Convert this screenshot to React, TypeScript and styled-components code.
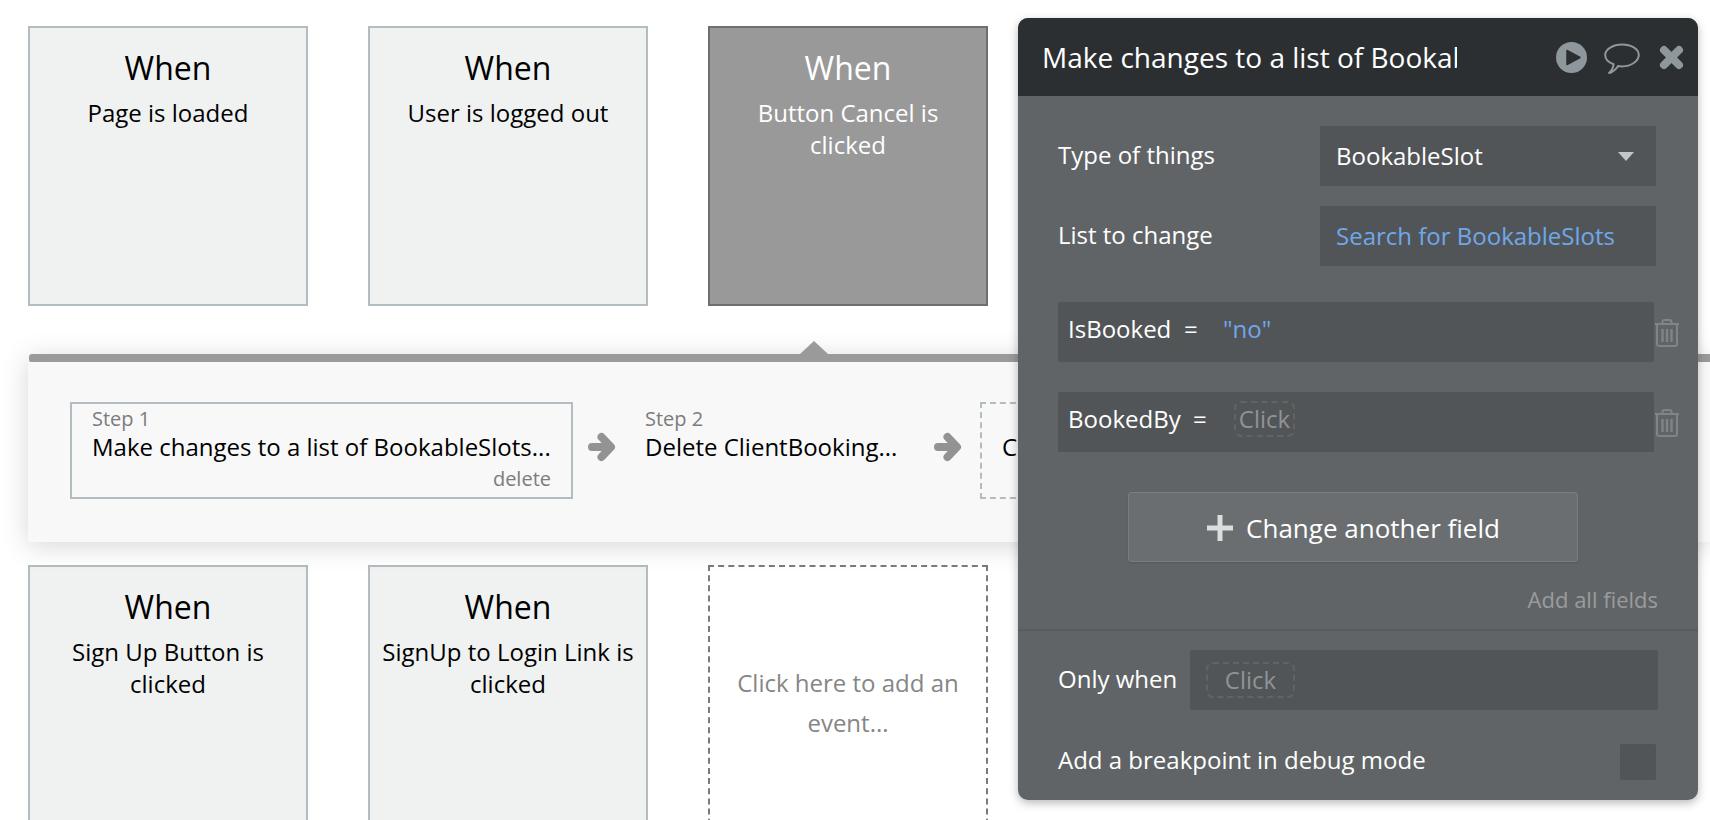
import React from "react";
import styled, { createGlobalStyle } from "styled-components";

const Global = createGlobalStyle`
  html, body { margin: 0; padding: 0; background: #fff; }
  * { box-sizing: border-box; }
`;

const Page = styled.div`
  position: relative;
  width: 1710px;
  height: 820px;
  overflow: hidden;
  padding: 26px 0 0 28px;
  background: #fff;
  font-family: "Open Sans", "Noto Sans", sans-serif;
  color: #000;
`;

const CardRow = styled.div`
  display: flex;
  gap: 60px;
`;

const Card = styled.div<{ $variant?: "selected" | "empty" }>`
  flex: 0 0 280px;
  width: 280px;
  height: 280px;
  display: flex;
  flex-direction: column;
  align-items: center;
  padding: 18px 10px 0;
  text-align: center;
  border: 2px ${(p) => (p.$variant === "empty" ? "dashed #7b7b7b" : "solid")};
  border-color: ${(p) =>
    p.$variant === "selected" ? "#6f6f6f" : p.$variant === "empty" ? "#7b7b7b" : "#b3bdc1"};
  background: ${(p) =>
    p.$variant === "selected" ? "#999999" : p.$variant === "empty" ? "#ffffff" : "#f0f2f1"};
  color: ${(p) => (p.$variant === "selected" ? "#ffffff" : "#000000")};
  ${(p) => p.$variant === "empty" && "justify-content: center; padding: 0 20px 4px;"}
`;

const When = styled.div`
  font-size: 32px;
  line-height: 44px;
`;

const Trigger = styled.div`
  margin-top: 7px;
  font-size: 24px;
  line-height: 32px;
`;

const AddEvent = styled.div`
  font-size: 24px;
  line-height: 40px;
  color: #868686;
`;

const Band = styled.div`
  position: relative;
  margin: 48px 0 23px;
  height: 188px;
  background: #f8f8f8;
  box-shadow: 0 4px 26px rgba(0, 0, 0, 0.16);
  display: flex;
  align-items: flex-start;
  padding: 48px 0 0 42px;
  &::before {
    content: "";
    position: absolute;
    left: 772px;
    top: -13px;
    width: 0;
    height: 0;
    border-left: 14px solid transparent;
    border-right: 14px solid transparent;
    border-bottom: 13px solid #9a9a9a;
  }
  &::after {
    content: "";
    position: absolute;
    left: 1px;
    right: 0;
    top: 0;
    height: 8px;
    background: #9a9a9a;
    border-top-left-radius: 3px;
    border-bottom-left-radius: 2px;
  }
`;

const Step = styled.div<{ $variant?: "active" | "empty" | "plain"; $width: number }>`
  position: relative;
  flex: 0 0 ${(p) => p.$width}px;
  width: ${(p) => p.$width}px;
  height: 97px;
  padding: 2px 20px 0;
  border: 2px ${(p) => (p.$variant === "empty" ? "dashed #b3bdc1" : p.$variant === "active" ? "solid #b3bdc1" : "solid transparent")};
`;

const StepLabel = styled.div`
  font-size: 20px;
  line-height: 25px;
  color: #7c7c7c;
`;

const StepName = styled.div`
  font-size: 24px;
  line-height: 32px;
  white-space: nowrap;
`;

const StepDelete = styled.div`
  margin-top: 2px;
  text-align: right;
  font-size: 20px;
  line-height: 28px;
  color: #7c7c7c;
`;

const StepEmptyText = styled.div`
  font-size: 24px;
  line-height: 32px;
  padding-top: 25px;
  white-space: nowrap;
`;

const ArrowIcon = styled.svg<{ $after: number }>`
  flex: 0 0 28px;
  width: 28px;
  height: 30px;
  margin: 30px ${(p) => p.$after}px 0 15px;
  color: #939393;
`;

const Panel = styled.div`
  position: absolute;
  left: 1018px;
  top: 18px;
  width: 680px;
  height: 782px;
  background: #606467;
  border-radius: 10px;
  box-shadow: 0 3px 10px rgba(0, 0, 0, 0.28);
  color: #fff;
  overflow: hidden;
  display: flex;
  flex-direction: column;
`;

const PanelHeader = styled.div`
  flex: 0 0 78px;
  height: 78px;
  background: #2b2f31;
  display: flex;
  align-items: center;
  padding: 0 14px 0 24px;
`;

const PanelTitle = styled.div`
  flex: 0 0 415px;
  width: 415px;
  overflow: hidden;
  white-space: nowrap;
  font-size: 28px;
  line-height: 38px;
`;

const HeaderIcons = styled.div`
  margin-left: auto;
  display: flex;
  align-items: center;
  color: #8d979c;
`;

const PlayIcon = styled.svg`
  width: 31px;
  height: 31px;
`;

const BubbleIcon = styled.svg`
  width: 36px;
  height: 32px;
  margin: 3px 19px 0 17px;
`;

const CloseIcon = styled.svg`
  width: 25px;
  height: 25px;
`;

const PanelBody = styled.div`
  padding: 30px 42px 0 40px;
`;

const FormRow = styled.div`
  display: flex;
  align-items: center;
  height: 60px;
  margin-bottom: 20px;
`;

const Label = styled.div<{ $width?: number }>`
  flex: 0 0 ${(p) => p.$width ?? 262}px;
  font-size: 24px;
  line-height: 32px;
  padding-bottom: 2px;
  white-space: nowrap;
`;

const Field = styled.div`
  flex: 1;
  height: 60px;
  background: #525558;
  border-radius: 2px;
  display: flex;
  align-items: center;
  padding: 0 16px 2px;
  font-size: 24px;
  position: relative;
  white-space: nowrap;
`;

const Blue = styled.span`
  color: #6fa8ea;
`;

const Caret = styled.span`
  position: absolute;
  right: 22px;
  top: 26px;
  width: 0;
  height: 0;
  border-left: 8px solid transparent;
  border-right: 8px solid transparent;
  border-top: 9px solid #c2c8ca;
`;

const ChangeRow = styled.div<{ $top: number }>`
  display: flex;
  align-items: center;
  margin-top: ${(p) => p.$top}px;
`;

const ChangeField = styled.div`
  flex: 0 0 596px;
  height: 60px;
  background: #525558;
  border-radius: 2px;
  display: flex;
  align-items: flex-start;
  padding: 9px 10px 0;
  font-size: 24px;
  line-height: 36px;
  white-space: nowrap;
`;

const Key = styled.span<{ $width: number }>`
  flex: 0 0 ${(p) => p.$width}px;
`;

const ClickBox = styled.span<{ $width: number }>`
  display: inline-flex;
  align-items: center;
  justify-content: center;
  width: ${(p) => p.$width}px;
  height: 36px;
  border: 2px dashed #606467;
  border-radius: 7px;
  color: #8f9395;
  font-size: 24px;
  line-height: 32px;
`;

const TrashIcon = styled.svg`
  flex: 0 0 26px;
  width: 26px;
  height: 28px;
  margin-top: 1px;
  color: #7e8488;
`;

const AddButton = styled.div`
  width: 450px;
  height: 70px;
  margin: 40px 0 0 70px;
  padding-top: 2px;
  background: #6a6e70;
  border: 1px solid #797d80;
  border-radius: 3px;
  box-shadow: 0 1px 2px rgba(0, 0, 0, 0.1);
  display: flex;
  align-items: center;
  justify-content: center;
  gap: 12px;
  font-size: 26px;
`;

const PlusIcon = styled.svg`
  width: 28px;
  height: 28px;
  color: #dcdddd;
`;

const AddAll = styled.div`
  margin: 22px -2px 0 0;
  text-align: right;
  font-size: 22px;
  line-height: 30px;
  color: #999c9e;
`;

const Divider = styled.div`
  height: 2px;
  background: #585c5f;
  margin-top: 15px;
`;

const PanelFoot = styled.div`
  padding: 19px 40px 0;
`;

const OnlyRow = styled.div`
  display: flex;
  align-items: center;
  height: 60px;
`;

const FootField = styled.div`
  flex: 1;
  height: 60px;
  background: #525558;
  border-radius: 2px;
  display: flex;
  align-items: center;
  padding: 0 16px 1px;
`;

const BreakRow = styled.div`
  display: flex;
  align-items: center;
  justify-content: space-between;
  margin: 34px 2px 0 0;
  height: 36px;
`;

const BreakLabel = styled(Label)`
  padding-bottom: 5px;
`;

const Check = styled.div`
  width: 36px;
  height: 36px;
  background: #525558;
  border-radius: 2px;
`;

const Arrow = ({ after }: { after: number }) => (
  <ArrowIcon $after={after} viewBox="0 0 28 30" fill="none" stroke="currentColor" strokeWidth="8" strokeLinecap="round" strokeLinejoin="round">
    <path d="M4 15h18M13.500 5 23 15 13.500 25" />
  </ArrowIcon>
);

const Trash = () => (
  <TrashIcon viewBox="0 0 26 28" fill="none" stroke="currentColor" strokeWidth="2">
    <path d="M1 5h24M8.500 4.500V3c0-1.100.9-2 2-2h5c1.100 0 2 .9 2 2v1.500" />
    <path d="M3 5v20c0 1.100.9 2 2 2h16c1.100 0 2-.9 2-2V5" />
    <path d="M8.500 10v13M13 10v13M17.500 10v13" strokeWidth="2.400" />
  </TrashIcon>
);

const cardsTop = ["Page is loaded", "User is logged out"];

export default function App() {
  return (
    <Page>
      <Global />
      <CardRow>
        {cardsTop.map((t) => (
          <Card key={t}>
            <When>When</When>
            <Trigger>{t}</Trigger>
          </Card>
        ))}
        <Card $variant="selected">
          <When>When</When>
          <Trigger>Button Cancel is clicked</Trigger>
        </Card>
      </CardRow>

      <Band>
        <Step $variant="active" $width={503}>
          <StepLabel>Step 1</StepLabel>
          <StepName>Make changes to a list of BookableSlots...</StepName>
          <StepDelete>delete</StepDelete>
        </Step>
        <Arrow after={7} />
        <Step $variant="plain" $width={296}>
          <StepLabel>Step 2</StepLabel>
          <StepName>Delete ClientBooking...</StepName>
        </Step>
        <Arrow after={18} />
        <Step $variant="empty" $width={503}>
          <StepEmptyText>Click here to add an action...</StepEmptyText>
        </Step>
      </Band>

      <CardRow>
        <Card>
          <When>When</When>
          <Trigger>Sign Up Button is clicked</Trigger>
        </Card>
        <Card>
          <When>When</When>
          <Trigger>SignUp to Login Link is clicked</Trigger>
        </Card>
        <Card $variant="empty">
          <AddEvent>Click here to add an event...</AddEvent>
        </Card>
      </CardRow>

      <Panel>
        <PanelHeader>
          <PanelTitle>Make changes to a list of BookableSlots...</PanelTitle>
          <HeaderIcons>
            <PlayIcon viewBox="0 0 31 31">
              <circle cx="15.500" cy="15.500" r="15.500" fill="currentColor" />
              <path d="M11 8.500v14L24 15.500z" fill="#2b2f31" stroke="#2b2f31" strokeWidth="1.500" strokeLinejoin="round" />
            </PlayIcon>
            <BubbleIcon viewBox="0 0 36 32" fill="none" stroke="currentColor" strokeWidth="2">
              <path d="M18 1.500C9 1.500 1.200 6.200 1.200 12c0 4 3.600 7.500 8.400 9.300-.4 3-2 6.400-5 9 3.800-1.200 7.300-4 9.500-7.200 1.300.2 2.600.3 3.900.3 9 0 16.800-5.200 16.800-11.400S27 1.500 18 1.500z" />
            </BubbleIcon>
            <CloseIcon viewBox="0 0 25 25" fill="none" stroke="currentColor" strokeWidth="8" strokeLinecap="round">
              <path d="M5 5l15 15M20 5 5 20" />
            </CloseIcon>
          </HeaderIcons>
        </PanelHeader>
        <PanelBody>
          <FormRow>
            <Label>Type of things</Label>
            <Field>
              BookableSlot
              <Caret />
            </Field>
          </FormRow>
          <FormRow>
            <Label>List to change</Label>
            <Field>
              <Blue>Search for BookableSlots</Blue>
            </Field>
          </FormRow>
          <ChangeRow $top={36}>
            <ChangeField>
              <Key $width={116}>IsBooked</Key>
              <Key $width={39}>=</Key>
              <Blue>"no"</Blue>
            </ChangeField>
            <Trash />
          </ChangeRow>
          <ChangeRow $top={30}>
            <ChangeField>
              <Key $width={125}>BookedBy</Key>
              <Key $width={41}>=</Key>
              <ClickBox $width={61}>Click</ClickBox>
            </ChangeField>
            <Trash />
          </ChangeRow>
          <AddButton>
            <PlusIcon viewBox="0 0 28 28" fill="none" stroke="currentColor" strokeWidth="5">
              <path d="M14 1v26M1 14h26" />
            </PlusIcon>
            Change another field
          </AddButton>
          <AddAll>Add all fields</AddAll>
        </PanelBody>
        <Divider />
        <PanelFoot>
          <OnlyRow>
            <Label $width={132}>Only when</Label>
            <FootField>
              <ClickBox $width={89}>Click</ClickBox>
            </FootField>
          </OnlyRow>
          <BreakRow>
            <BreakLabel>Add a breakpoint in debug mode</BreakLabel>
            <Check />
          </BreakRow>
        </PanelFoot>
      </Panel>
    </Page>
  );
}
